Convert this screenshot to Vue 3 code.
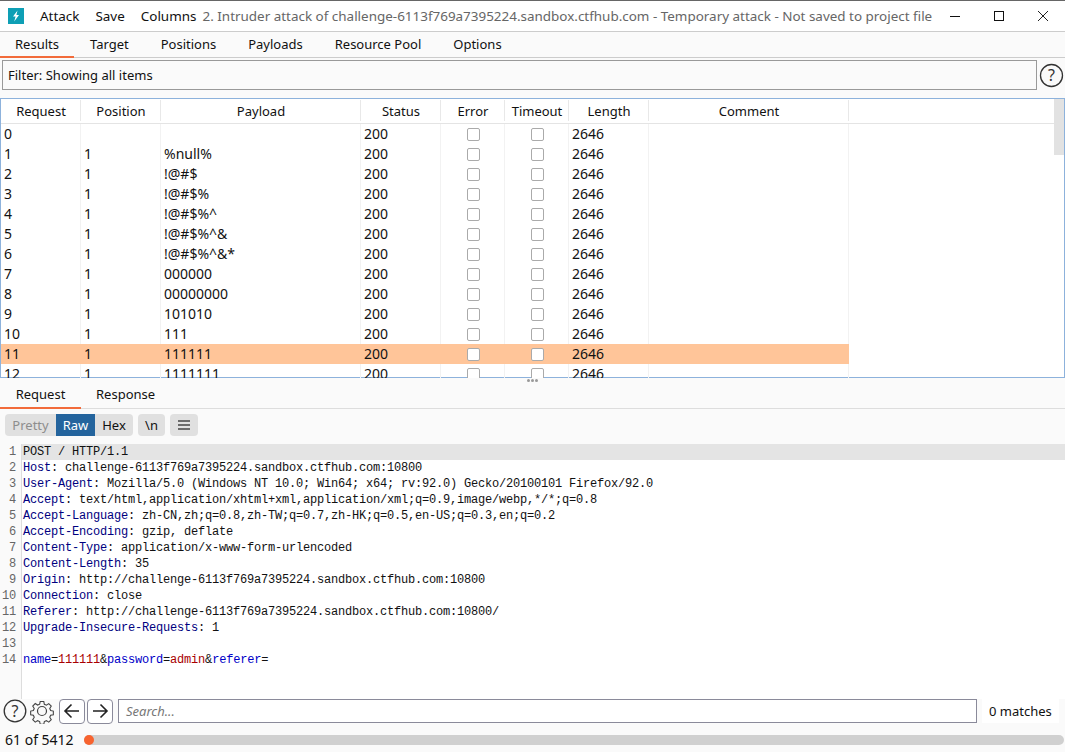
<script setup>
const tabs = ['Results', 'Target', 'Positions', 'Payloads', 'Resource Pool', 'Options']
const cols = ['Request', 'Position', 'Payload', 'Status', 'Error', 'Timeout', 'Length', 'Comment']
const payloads = ['', '%null%', '!@#$', '!@#$%', '!@#$%^', '!@#$%^&', '!@#$%^&*', '000000', '00000000', '101010', '111', '111111', '1111111']
const rows = payloads.map((payload, i) => ({ id: i, pos: i === 0 ? '' : '1', payload }))
const headers = [
  ['Host', 'challenge-6113f769a7395224.sandbox.ctfhub.com:10800'],
  ['User-Agent', 'Mozilla/5.0 (Windows NT 10.0; Win64; x64; rv:92.0) Gecko/20100101 Firefox/92.0'],
  ['Accept', 'text/html,application/xhtml+xml,application/xml;q=0.9,image/webp,*/*;q=0.8'],
  ['Accept-Language', 'zh-CN,zh;q=0.8,zh-TW;q=0.7,zh-HK;q=0.5,en-US;q=0.3,en;q=0.2'],
  ['Accept-Encoding', 'gzip, deflate'],
  ['Content-Type', 'application/x-www-form-urlencoded'],
  ['Content-Length', '35'],
  ['Origin', 'http://challenge-6113f769a7395224.sandbox.ctfhub.com:10800'],
  ['Connection', 'close'],
  ['Referer', 'http://challenge-6113f769a7395224.sandbox.ctfhub.com:10800/'],
  ['Upgrade-Insecure-Requests', '1'],
]
</script>

<template>
  <div class="app">
    <header class="titlebar">
      <svg class="logo" width="16" height="16" viewBox="0 0 16 16">
        <rect width="16" height="16" fill="#0e9fb5" />
        <path d="M9.5 2.5 L5 8.6 H7.6 L6.2 13.5 L11 7 H8.4 Z" fill="#fff" />
      </svg>
      <nav class="menu"><span>Attack</span><span>Save</span><span>Columns</span></nav>
      <div class="title">2. Intruder attack of challenge-6113f769a7395224.sandbox.ctfhub.com - Temporary attack - Not saved to project file</div>
      <div class="winbtns">
        <svg width="12" height="12" viewBox="0 0 12 12"><path d="M1 6.5H11" stroke="#111" stroke-width="1" /></svg>
        <svg width="12" height="12" viewBox="0 0 12 12"><rect x="1.5" y="1.5" width="9" height="9" fill="none" stroke="#111" /></svg>
        <svg width="12" height="12" viewBox="0 0 12 12"><path d="M1 1L11 11M11 1L1 11" stroke="#222" stroke-width="1" fill="none" /></svg>
      </div>
    </header>

    <div class="tabs main-tabs">
      <div v-for="(t, i) in tabs" :key="t" class="tab" :class="{ active: i === 0 }">{{ t }}</div>
    </div>

    <div class="filter-row">
      <div class="filter">Filter: Showing all items</div>
      <svg class="help" width="25" height="25" viewBox="0 0 25 25">
        <circle cx="12.5" cy="12.5" r="11" fill="none" stroke="#333" stroke-width="1.3" />
        <text x="12.5" y="18" text-anchor="middle" class="q">?</text>
      </svg>
    </div>

    <section class="table">
      <div class="thead">
        <div v-for="c in cols" :key="c" class="th">{{ c }}</div>
      </div>
      <div class="tbody">
        <div v-for="r in rows" :key="r.id" class="tr" :class="{ sel: r.id === 11 }">
          <div class="td">{{ r.id }}</div>
          <div class="td">{{ r.pos }}</div>
          <div class="td">{{ r.payload }}</div>
          <div class="td">200</div>
          <div class="td box"><i></i></div>
          <div class="td box"><i></i></div>
          <div class="td">2646</div>
          <div class="td"></div>
        </div>
      </div>
      <div class="scrollbar"></div>
      <div class="grip"><b></b><b></b><b></b></div>
    </section>

    <div class="tabs sub-tabs">
      <div class="tab active">Request</div>
      <div class="tab">Response</div>
    </div>

    <div class="toolbar">
      <div class="seg">
        <span class="off">Pretty</span><span class="on">Raw</span><span>Hex</span>
      </div>
      <div class="tbtn nl">\n</div>
      <div class="tbtn burger">
        <svg width="14" height="12" viewBox="0 0 14 12"><path d="M1 2H13M1 6H13M1 10H13" stroke="#444" stroke-width="1.4" /></svg>
      </div>
    </div>

    <div class="editor">
      <div class="line hl"><span class="no">1</span><span class="code">POST / HTTP/1.1</span></div>
      <div v-for="(h, i) in headers" :key="h[0]" class="line">
        <span class="no">{{ i + 2 }}</span><span class="code"><span class="hn">{{ h[0] }}</span>: {{ h[1] }}</span>
      </div>
      <div class="line"><span class="no">13</span><span class="code"></span></div>
      <div class="line">
        <span class="no">14</span><span class="code"><span class="pn">name</span>=<span class="pv">111111</span>&amp;<span class="pn">password</span>=<span class="pv">admin</span>&amp;<span class="pn">referer</span>=</span>
      </div>
      <div class="gutter-fill"><span class="no"></span></div>
    </div>

    <div class="searchbar">
      <svg class="help small" width="24" height="24" viewBox="0 0 24 24">
        <circle cx="12" cy="12" r="10.8" fill="none" stroke="#333" stroke-width="1.3" />
        <text x="12" y="17.5" text-anchor="middle" class="q">?</text>
      </svg>
      <svg class="gear" width="26" height="26" viewBox="0 0 26 26">
        <path d="M11 2.5h4l.6 3 2.3 1 2.6-1.7 2.8 2.8-1.7 2.6 1 2.3 3 .6v4l-3 .6-1 2.3 1.7 2.6-2.8 2.8-2.6-1.7-2.300 1-.6 3h-4l-.6-3-2.300-1-2.600 1.700-2.800-2.800 1.700-2.600-1-2.300-3-.6v-4l3-.6 1-2.300L2.700 7.500l2.800-2.800 2.600 1.700 2.300-1z" transform="translate(1.300 1.300) scale(.9)" fill="none" stroke="#444" stroke-width="1.200" />
        <circle cx="13" cy="13" r="4.500" fill="none" stroke="#444" stroke-width="1.200" />
      </svg>
      <button class="nav first">
        <svg width="18" height="16" viewBox="0 0 18 16"><path d="M16 8H2M8.500 1.500L2 8l6.500 6.500" fill="none" stroke="#222" stroke-width="1.600" /></svg>
      </button>
      <button class="nav">
        <svg width="18" height="16" viewBox="0 0 18 16"><path d="M2 8H16M9.500 1.500L16 8l-6.500 6.500" fill="none" stroke="#222" stroke-width="1.600" /></svg>
      </button>
      <div class="search">Search...</div>
      <div class="matches">0 matches</div>
    </div>

    <footer class="status">
      <span class="count">61 of 5412</span>
      <div class="progress"><i></i></div>
    </footer>
  </div>
</template>

<style>
html, body { margin: 0; background: #fafafa; }
</style>

<style scoped>
.app {
  width: 1065px;
  height: 752px;
  display: flex;
  flex-direction: column;
  background: #fafafa;
  font-family: "Noto Sans", "Open Sans", sans-serif;
  font-size: 13px;
  color: #111;
  overflow: hidden;
}
.titlebar {
  height: 30px;
  flex: none;
  display: flex;
  align-items: center;
  background: #fff;
  border-top: 1px solid #666;
  border-bottom: 1px solid #ccc;
  font-size: 13.45px;
}
.logo { margin-left: 8px; flex: none; }
.menu { display: flex; gap: 16px; margin-left: 16px; }
.title { margin-left: 6px; color: #666; white-space: nowrap; }
.winbtns {
  margin-left: auto;
  display: flex;
  gap: 32px;
  padding-right: 16px;
}
.tabs { display: flex; flex: none; }
.tab { position: relative; text-align: center; }
.main-tabs { height: 25px; line-height: 24px; border-bottom: 1px solid #ccc; }
.main-tabs .tab { padding: 0 15px 0 15px; margin-right: 2px; }
.main-tabs .tab:first-child { margin-right: 1px; }
.tab.active::after {
  content: "";
  position: absolute;
  left: 0;
  right: 0;
  bottom: -1px;
  height: 2px;
  background: #f26b3a;
}
.filter-row {
  flex: none;
  display: flex;
  align-items: flex-start;
  height: 40px;
  padding: 2px 2px 0 2px;
  box-sizing: border-box;
}
.filter {
  flex: none;
  width: 1035px;
  height: 30px;
  box-sizing: border-box;
  border: 1px solid #999;
  line-height: 28px;
  padding-left: 5px;
}
.help { flex: none; }
.filter-row .help { margin: 3px 0 0 2px; }
.q { font-family: "Noto Sans", sans-serif; font-size: 16px; fill: #333; }
.table {
  position: relative;
  flex: none;
  height: 280px;
  box-sizing: border-box;
  border: 1px solid #8db2dc;
  background: #fff;
}
.thead, .tr {
  display: grid;
  grid-template-columns: 80px 80px 200px 80px 64px 64px 80px 200px;
  width: 848px;
}
.thead { height: 25px; }
.th {
  text-align: center;
  line-height: 24px;
  position: relative;
}
.thead { width: 1053px; border-bottom: 1px solid #e4e4e4; box-sizing: border-box; }
.th::after {
  content: "";
  position: absolute;
  right: 0;
  top: 1px;
  bottom: 2px;
  width: 1px;
  background: #e8e8e8;
}
.tbody { height: 254px; overflow: hidden; }
.tr { height: 20px; line-height: 20px; font-size: 14px; }
.tr.sel { background: #ffc599; }
.tr.sel .td { border-right-color: transparent; }
.td {
  padding-left: 3px;
  box-sizing: border-box;
  border-right: 1px solid #f2f2f2;
  min-width: 0;
}
.box { display: flex; align-items: center; justify-content: center; padding: 0 0 0 1px; }
.box i {
  width: 13px;
  height: 13px;
  box-sizing: border-box;
  border: 1px solid #aaa;
  border-radius: 2px;
  background: #fff;
}
.scrollbar {
  position: absolute;
  right: 0;
  top: 0;
  width: 10px;
  height: 56px;
  background: #e2e2e2;
}
.grip {
  position: absolute;
  left: 526px;
  bottom: -5px;
  display: flex;
  gap: 1px;
}
.grip b { width: 3px; height: 3px; border-radius: 50%; background: #999; }
.sub-tabs { height: 29px; margin-top: 2px; line-height: 28px; border-bottom: 1px solid #ddd; box-sizing: border-box; }
.sub-tabs .tab { padding: 0 15px; }
.sub-tabs .tab:first-child { width: 81px; box-sizing: border-box; }
.toolbar {
  flex: none;
  height: 35px;
  box-sizing: border-box;
  display: flex;
  padding: 5px 0 0 5px;
  gap: 5px;
}
.seg {
  display: flex;
  height: 22px;
  line-height: 22px;
  border-radius: 4px;
  overflow: hidden;
  background: #e0e0e0;
}
.seg span { text-align: center; width: 38px; }
.seg .off { width: 51px; color: #8d8d8d; }
.seg .on { width: 39px; background: #24649d; color: #fff; }
.tbtn {
  height: 22px;
  line-height: 21px;
  border-radius: 4px;
  background: #e0e0e0;
  text-align: center;
  display: flex;
  align-items: center;
  justify-content: center;
}
.nl { width: 27px; }
.burger { width: 28px; }
.editor {
  flex: none;
  height: 255px;
  background: #fff;
  display: flex;
  flex-direction: column;
  font-family: "Liberation Mono", monospace;
  font-size: 12px;
  letter-spacing: -0.2px;
  white-space: pre;
  overflow: hidden;
}
.line { display: flex; height: 16px; line-height: 16px; flex: none; }
.no {
  flex: none;
  width: 22px;
  box-sizing: border-box;
  padding-right: 5px;
  text-align: right;
  color: #666;
  border-right: 1px solid #ddd;
  background: #fafafa;
}
.code { flex: 1; padding-left: 1px; color: #111; }
.hl .code { background: #e4e4e4; }
.hn { color: #000080; }
.pn { color: #0000c8; }
.pv { color: #a80000; }
.gutter-fill { flex: 1; display: flex; }
.gutter-fill .no { height: 100%; }
.searchbar {
  flex: none;
  height: 24px;
  display: flex;
  align-items: center;
  padding-left: 3px;
}
.gear { margin-left: 2px; flex: none; }
.nav {
  width: 26px;
  height: 25px;
  margin-left: 2px;
  padding: 0;
  box-sizing: border-box;
  border: 1px solid #8a8a9a;
  border-radius: 4px;
  background: #fff;
  display: flex;
  align-items: center;
  justify-content: center;
}
.nav.first { margin-left: 4px; }
.search {
  width: 859px;
  height: 24px;
  margin-left: 5px;
  box-sizing: border-box;
  border: 1px solid #8a8a9a;
  background: #fff;
  line-height: 22px;
  padding-left: 7px;
  font-style: italic;
  color: #777;
}
.matches {
  margin-left: 5px;
  padding: 0 7px;
  background: #fff;
  line-height: 24px;
}
.status {
  flex: none;
  height: 29px;
  display: flex;
  align-items: center;
  padding: 4px 0 0 5px;
  box-sizing: border-box;
}
.count { width: 79px; flex: none; font-size: 14px; }
.progress {
  position: relative;
  width: 980px;
  height: 10px;
  border-radius: 5px;
  background: #d0d0d0;
}
.progress i {
  position: absolute;
  left: 0;
  top: 0;
  width: 10px;
  height: 10px;
  border-radius: 50%;
  background: #f7632f;
}
</style>
